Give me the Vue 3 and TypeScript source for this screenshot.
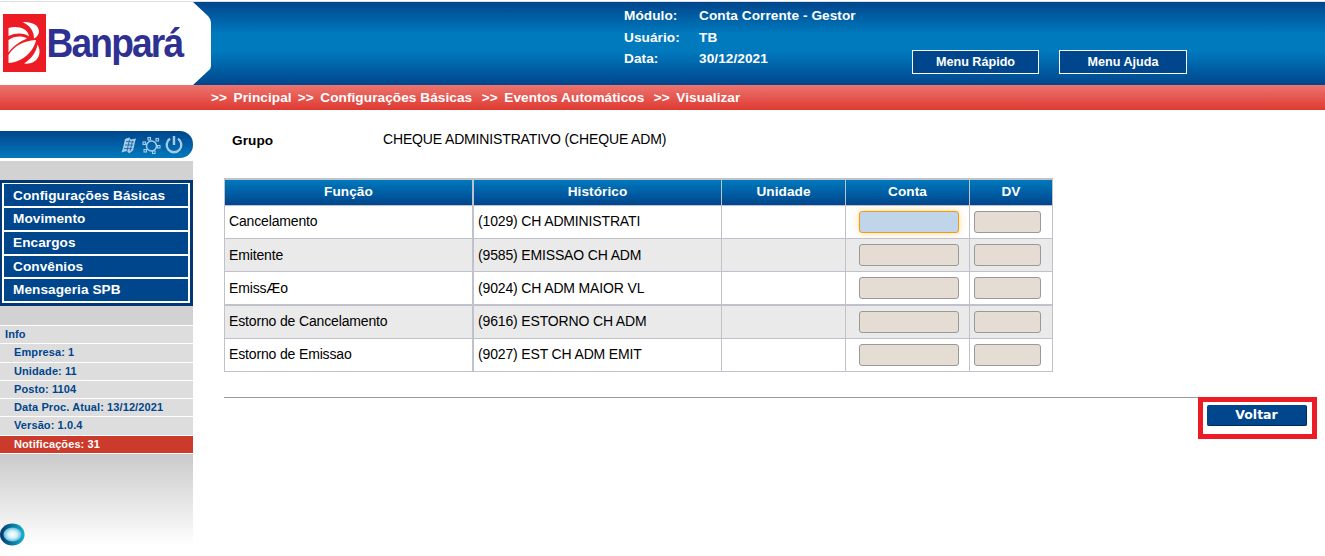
<script setup lang="ts">
interface Row { funcao: string; historico: string; focused?: boolean; thick?: boolean }

const session: { label: string; value: string }[] = [
  { label: 'Módulo:', value: 'Conta Corrente - Gestor' },
  { label: 'Usuário:', value: 'TB' },
  { label: 'Data:', value: '30/12/2021' },
]
const crumbs: string[] = ['Principal', 'Configurações Básicas', 'Eventos Automáticos', 'Visualizar']
const menu: string[] = ['Configurações Básicas', 'Movimento', 'Encargos', 'Convênios', 'Mensageria SPB']
const info: string[] = ['Empresa: 1', 'Unidade: 11', 'Posto: 1104', 'Data Proc. Atual: 13/12/2021', 'Versão: 1.0.4']
const columns: string[] = ['Função', 'Histórico', 'Unidade', 'Conta', 'DV']
const rows: Row[] = [
  { funcao: 'Cancelamento', historico: '(1029) CH ADMINISTRATI', focused: true },
  { funcao: 'Emitente', historico: '(9585) EMISSAO CH ADM' },
  { funcao: 'EmissÆo', historico: '(9024) CH ADM MAIOR VL', thick: true },
  { funcao: 'Estorno de Cancelamento', historico: '(9616) ESTORNO CH ADM' },
  { funcao: 'Estorno de Emissao', historico: '(9027) EST CH ADM EMIT' },
]
</script>

<template>
  <div class="page">
    <header class="top">
      <svg class="logo" width="212" height="83" viewBox="0 2 212 83">
        <path d="M0 2H193L208 16Q211 19 211 24V66Q211 69 208 71L193 85H0Z" fill="#fff" />
        <rect x="3" y="14" width="43" height="58" fill="#ed1c24" />
        <g fill="#fff">
          <path d="M22.500 22C32 21.500 39 25 39 31.500C39 34.500 37 37 34 38.500C34 31 30 25.500 22.500 22Z" />
          <path d="M8.500 28C17 25.500 28 28 29 36.500C25 33 16 32 8.500 36Z" />
          <path d="M8.500 40C14 36 22 35.500 27 38.500C20 41.500 13 46 8.500 52.500Z" />
          <path d="M8.500 55C14 46 23 41 36 40C34 51 23 62 8.500 63Z" />
          <path d="M24 63.500C31 59 36 53 37.500 44.500C43 54 37 65 24 63.500Z" />
        </g>
        <text transform="translate(46.500 57) scale(.93 1)">Banpará</text>
      </svg>
      <dl class="session">
        <div v-for="s in session" :key="s.label"><dt>{{ s.label }}</dt><dd>{{ s.value }}</dd></div>
      </dl>
      <button class="quick first">Menu Rápido</button>
      <button class="quick">Menu Ajuda</button>
    </header>
    <nav class="crumbs">
      <span v-for="c in crumbs" :key="c" class="crumb"><i>&gt;&gt;</i>{{ c }}</span>
    </nav>
    <div class="body">
      <aside>
        <div class="tools">
          <svg width="72" height="26" viewBox="116 131 72 26" fill="none" stroke="#a5cbe6">
            <path d="M125 139L129 137.500L131 139.500L136 138.500L135 142L133 150.500L129 153.500L127 151L121.500 152.500L123 148Z" fill="#a5cbe6" stroke="none" />
            <path d="M126 141.500L134 142M125 145H133M124 148.500H132M129.500 139.500L127 151M132.500 141L130 151" stroke="#0a5fa6" stroke-width=".8" />
            <circle cx="151.500" cy="146" r="5" stroke-width="1.500" />
            <g stroke-width="1.100" fill="#0769ae">
              <rect x="148" y="137.500" width="2.500" height="2.500" /><rect x="156" y="138.500" width="2.500" height="2.500" />
              <rect x="143" y="142" width="2.500" height="2.500" /><rect x="157.500" y="145.500" width="2.500" height="2.500" />
              <rect x="144" y="149.500" width="2.500" height="2.500" /><rect x="152.500" y="151" width="2.500" height="2.500" />
            </g>
            <path d="M170 138.800A7.300 7.300 0 1 0 178 138.800M174 136V145" stroke-width="2.400" />
          </svg>
        </div>
        <div class="side">
          <ul class="menu"><li v-for="m in menu" :key="m">{{ m }}</li></ul>
          <ul class="info">
            <li class="title">Info</li>
            <li v-for="i in info" :key="i">{{ i }}</li>
            <li class="alert">Notificações: 31</li>
          </ul>
          <div class="fade">
            <svg width="26" height="25" viewBox="0 0 26 25">
              <defs>
                <linearGradient id="ring" x1="0" y1="0" x2="1" y2="0"><stop offset="0" stop-color="#07326f" /><stop offset=".5" stop-color="#077a9f" /><stop offset="1" stop-color="#16b2cf" /></linearGradient>
                <radialGradient id="core"><stop offset="0" stop-color="#fff" /><stop offset=".5" stop-color="#d5f1f8" /><stop offset="1" stop-color="#5dbcd9" /></radialGradient>
              </defs>
              <ellipse cx="12.300" cy="11.500" rx="12.300" ry="11" fill="url(#ring)" />
              <ellipse cx="12.500" cy="11.500" rx="9" ry="7" fill="url(#core)" />
            </svg>
          </div>
        </div>
      </aside>
      <main>
        <div class="group"><b>Grupo</b><span>CHEQUE ADMINISTRATIVO (CHEQUE ADM)</span></div>
        <table>
          <colgroup><col class="c1"><col class="c2"><col class="c3"><col class="c3"><col class="c5"></colgroup>
          <thead><tr><th v-for="c in columns" :key="c">{{ c }}</th></tr></thead>
          <tbody>
            <tr v-for="r in rows" :key="r.funcao" :class="{ thick: r.thick }">
              <td>{{ r.funcao }}</td><td>{{ r.historico }}</td><td></td>
              <td class="conta"><div class="field" :class="{ focused: r.focused }"></div></td>
              <td class="dv"><div class="field"></div></td>
            </tr>
          </tbody>
        </table>
        <div class="footer"><div class="rule"></div><div class="mark"><button>Voltar</button></div></div>
      </main>
    </div>
  </div>
</template>

<style>
body { margin: 0; background: #fff; }
</style>
<style scoped>
* { box-sizing: border-box; }
.page { width: 1325px; height: 556px; overflow: hidden; padding-top: 1px; font-family: "Liberation Sans", Arial, sans-serif; font-size: 14px; letter-spacing: -.15px; color: #000; }
ul, dl, dd { margin: 0; padding: 0; list-style: none; }
button { padding: 0; border-radius: 0; color: #fff; background: #00468c; font-weight: bold; font-family: inherit; }
.session, .crumbs, .menu, th, .group b { font-size: 13.6px; letter-spacing: .08px; }
.top { display: flex; height: 84px; border-top: 1px solid #dcdfe3; background: linear-gradient(#00458c, #0079bd 38%, #0079bd 60%, #00458c); color: #fff; font-weight: bold; }
.logo { flex: none; overflow: visible; }
.logo text { font: bold 40px "Liberation Sans", sans-serif; letter-spacing: -2px; fill: #2e3192; }
.session { width: 288px; margin: 3px 0 0 412px; flex: none; }
.session div { display: flex; height: 21.5px; line-height: 21px; }
.session dt { width: 75px; }
.quick { width: 128px; height: 24px; margin-top: 48px; border: 1px solid #fff; font-size: 12.6px; letter-spacing: 0; line-height: 21px; }
.quick.first { width: 127px; margin-right: 20px; }
.crumbs { height: 25px; padding-left: 211px; display: flex; background: linear-gradient(#ec746f, #df3a31); color: #fff; font-weight: bold; line-height: 25px; white-space: nowrap; }
.crumb { margin-right: 9.5px; }
.crumb:first-child { margin-right: 6px; }
.crumb i { font-style: normal; margin-right: 6.5px; }
.body { display: flex; }
aside { width: 193px; flex: none; padding-top: 21px; }
.tools { height: 27px; border-radius: 0 13px 13px 0; background: linear-gradient(#00458c, #0079bd); display: flex; justify-content: flex-end; padding-right: 5px; }
.side { margin-top: 3px; padding-top: 19px; background: #d2d2d2; }
.menu { height: 126px; background: #003774; border: solid #003774; border-width: 3px 3px 3px 2px; }
.menu li { height: 23.8px; border: 2px solid #fff; border-bottom: 0; background: #00468c; color: #fff; font-weight: bold; padding-left: 9px; line-height: 22px; }
.menu li:first-child { border-top-width: 1px; height: 23px; line-height: 23px; }
.menu li:last-child { border-bottom: 2px solid #fff; height: 25.600px; }
.info { margin-top: 19px; color: #00458c; font-size: 11px; letter-spacing: .1px; font-weight: bold; }
.info li { height: 18.25px; border-top: 1px solid #fff; background: #ddd; padding-left: 14px; line-height: 17px; }
.info .title { padding-left: 5px; }
.info .alert { background: #cb3a2a; color: #fff; height: 19.500px; border-bottom: 1px solid #fff; }
.fade { height: 92px; padding-top: 69px; background: linear-gradient(#cacaca, #fff); }
main { flex: 1; padding-left: 31px; }
.group { display: flex; height: 68px; padding-top: 19px; line-height: 20px; }
.group b { width: 159px; padding: 2px 0 0 8px; }
table { width: 829px; table-layout: fixed; border-spacing: 0; border-collapse: separate; border: solid #c1c1cb; border-width: 2px 0 0 1px; }
.c1 { width: 249px; } .c2 { width: 248px; } .c3 { width: 124px; } .c5 { width: 83px; }
th, td { padding: 0; border: solid #c1c1cb; border-width: 0 1px 1px 0; }
th:first-child, td:first-child { border-right-width: 2px; }
th { height: 26px; line-height: 24px; padding-bottom: 1px; color: #fff; background: linear-gradient(#0079bd, #00458c); }
td { height: 33px; padding: 0 4px 3px; line-height: 20px; }
tr:nth-child(2) td, tr:nth-child(3) td { padding-bottom: 1px; }
.thick td { height: 34px; border-bottom-width: 2px; }
tbody tr:nth-child(even) { background: #eaeaea; }
tbody tr td.conta, tbody tr td.dv { padding: 5px 0 5px 13px; }
tbody tr td.dv { padding-left: 4px; }
.field { width: 100px; height: 22px; border: 1px solid #999; border-radius: 3px; background: #e5dcd4; }
.dv .field { width: 67px; }
.field.focused { background: #c0d4ea; border-color: #f90; box-shadow: 0 0 8px rgba(255, 153, 0, .35); }
.footer { display: flex; margin-top: 25px; }
.rule { width: 974px; height: 1px; background: #999; }
.mark { width: 119px; height: 42px; border: 5px solid #ed1c24; padding: 3px 0 0 4px; }
.mark button { display: block; width: 100px; height: 21px; border: solid #002a57; border-width: 0 1px 1px 0; border-radius: 2px; font: bold 12.5px/20px "DejaVu Sans", sans-serif; letter-spacing: 0; }
</style>
